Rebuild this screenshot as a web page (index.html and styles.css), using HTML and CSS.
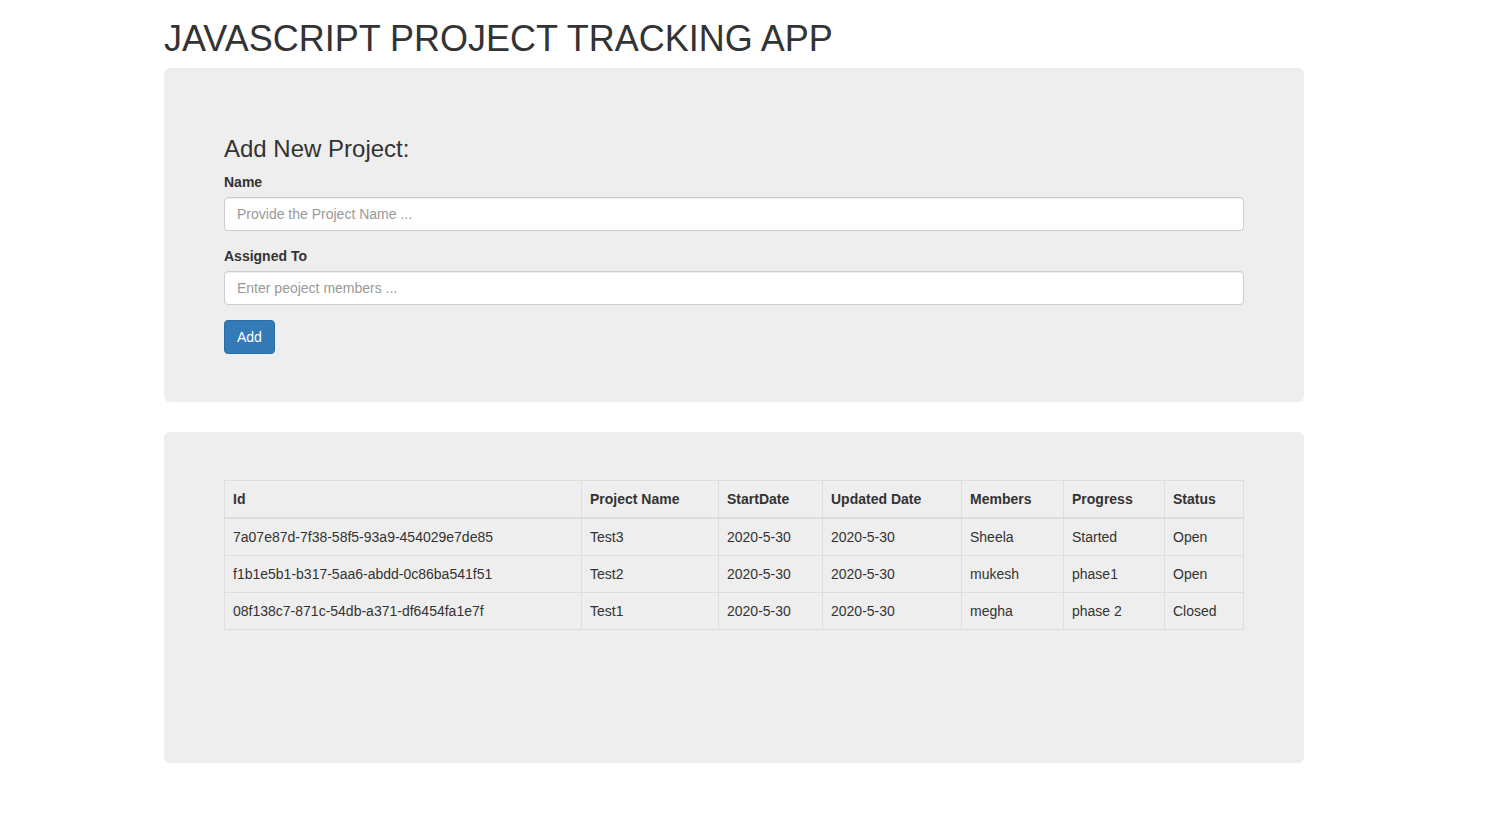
FILE: index.html
```html
<!DOCTYPE html>
<html>
<head>
<meta charset="utf-8">
<title>Project Tracking</title>
<link rel="stylesheet" href="styles.css">
</head>
<body>
<div class="container">
  <h1 class="title">JAVASCRIPT PROJECT TRACKING APP</h1>
  <div class="jumbotron">
    <h3 class="form-title">Add New Project:</h3>
    <form class="form">
      <div class="form-group">
        <label class="label">Name</label>
        <input class="input" type="text" placeholder="Provide the Project Name ...">
      </div>
      <div class="form-group">
        <label class="label">Assigned To</label>
        <input class="input" type="text" placeholder="Enter peoject members ...">
      </div>
      <button class="btn" type="button">Add</button>
    </form>
  </div>
  <div class="jumbotron jumbotron-list">
    <table class="table">
      <thead>
        <tr>
          <th class="c-id">Id</th>
          <th class="c-name">Project Name</th>
          <th class="c-start">StartDate</th>
          <th class="c-upd">Updated Date</th>
          <th class="c-mem">Members</th>
          <th class="c-prog">Progress</th>
          <th class="c-stat">Status</th>
        </tr>
      </thead>
      <tbody>
        <tr><td>7a07e87d-7f38-58f5-93a9-454029e7de85</td><td>Test3</td><td>2020-5-30</td><td>2020-5-30</td><td>Sheela</td><td>Started</td><td>Open</td></tr>
        <tr><td>f1b1e5b1-b317-5aa6-abdd-0c86ba541f51</td><td>Test2</td><td>2020-5-30</td><td>2020-5-30</td><td>mukesh</td><td>phase1</td><td>Open</td></tr>
        <tr><td>08f138c7-871c-54db-a371-df6454fa1e7f</td><td>Test1</td><td>2020-5-30</td><td>2020-5-30</td><td>megha</td><td>phase 2</td><td>Closed</td></tr>
      </tbody>
    </table>
    <div class="spacer"></div>
  </div>
</div>
</body>
</html>
```

FILE: styles.css
```css
* { box-sizing: border-box; }
html, body {
  margin: 0;
  padding: 0;
  background: #fff;
}
body {
  font-family: "Liberation Sans", Arial, sans-serif;
  font-size: 14px;
  line-height: 1.42857143;
  color: #333;
}
.container {
  width: 1140px;
  margin-left: 164px;
}
.title {
  font-size: 36px;
  font-weight: 400;
  line-height: 1.1;
  margin: 19px 0 9px 0;
  color: #333;
}
.jumbotron {
  background: #eee;
  border-radius: 6px;
  padding: 48px 60px;
  margin-bottom: 30px;
}
.form-title {
  font-size: 24px;
  font-weight: 400;
  line-height: 1.1;
  margin: 20px 0 10px 0;
}
.form-group {
  margin-bottom: 15px;
}
.label {
  display: inline-block;
  font-weight: 700;
  margin-bottom: 5px;
  max-width: 100%;
}
.input {
  display: block;
  width: 100%;
  height: 34px;
  padding: 6px 12px;
  font-family: inherit;
  font-size: 14px;
  line-height: 1.42857143;
  color: #555;
  background: #fff;
  border: 1px solid #ccc;
  border-radius: 4px;
  box-shadow: inset 0 1px 1px rgba(0,0,0,.075);
  outline: none;
}
.input::placeholder {
  color: #999;
  opacity: 1;
}
.btn {
  display: inline-block;
  height: 34px;
  padding: 6px 12px;
  font-family: inherit;
  font-size: 14px;
  line-height: 1.42857143;
  color: #fff;
  background: #337ab7;
  border: 1px solid #2e6da4;
  border-radius: 4px;
  cursor: pointer;
}
.table {
  width: 100%;
  border-collapse: collapse;
  border-spacing: 0;
  border: 1px solid #ddd;
  margin-bottom: 20px;
}
.table th, .table td {
  padding: 8px;
  line-height: 1.42857143;
  text-align: left;
  vertical-align: top;
  border: 1px solid #ddd;
  font-weight: 400;
}
.table thead th {
  font-weight: 700;
  vertical-align: bottom;
  border-bottom: 2px solid #ddd;
}
.c-id { width: 357px; }
.c-name { width: 137px; }
.c-start { width: 104px; }
.c-upd { width: 139px; }
.c-mem { width: 102px; }
.c-prog { width: 101px; }
.c-stat { width: 79px; }
.spacer {
  height: 65px;
}
```
